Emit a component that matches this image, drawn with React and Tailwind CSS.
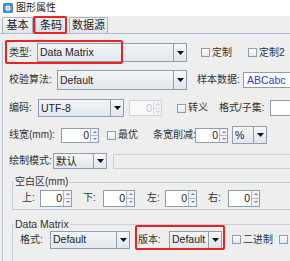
import React from "react";

const font = { fontFamily: '"Liberation Sans", "Noto Sans CJK SC", sans-serif' };

function Arrow() {
  return (
    <svg width="7" height="4" viewBox="0 0 7 4">
      <path d="M0 0 H7 L3.5 4 Z" fill="#111" />
    </svg>
  );
}

function Combo({ w, h = 19, value, className = "" }) {
  return (
    <div
      className={`flex shrink-0 border border-[#8e9db0] bg-gradient-to-b from-[#f3f5f8] to-[#e2e7ed] ${className}`}
      style={{ width: w, height: h }}
    >
      <div className="flex-1 flex items-center pl-[2px] text-[10.5px] text-[#222] leading-none overflow-hidden whitespace-nowrap">
        {value}
      </div>
      <div className="w-[13px] shrink-0 flex items-center justify-center border-l border-[#8e9db0] bg-gradient-to-b from-[#f6f8fa] to-[#dfe5ec]">
        <Arrow />
      </div>
    </div>
  );
}

function Spinner({ w, h = 16, disabled = false, className = "" }) {
  return (
    <div
      className={`flex shrink-0 border ${disabled ? "border-[#ccd4de] bg-[#f8f9fa]" : "border-[#8e9db0] bg-white"} ${className}`}
      style={{ width: w, height: h }}
    >
      <div
        className={`flex-1 flex items-center justify-end pr-[1px] text-[10.5px] leading-none ${disabled ? "text-[#c0c6ce]" : "text-[#222]"}`}
      >
        0
      </div>
      <div className={`w-[8px] flex flex-col border-l ${disabled ? "border-[#d4dae2]" : "border-[#b0bac6]"}`}>
        <div className={`flex-1 flex items-center justify-center border-b ${disabled ? "border-[#d4dae2]" : "border-[#b0bac6]"} bg-[#f0f2f5]`}>
          <svg width="4" height="2" viewBox="0 0 4 2"><path d="M0 2 L2 0 L4 2 Z" fill={disabled ? "#c8ced6" : "#888"} /></svg>
        </div>
        <div className="flex-1 flex items-center justify-center bg-[#f0f2f5]">
          <svg width="4" height="2" viewBox="0 0 4 2"><path d="M0 0 L4 0 L2 2 Z" fill={disabled ? "#c8ced6" : "#888"} /></svg>
        </div>
      </div>
    </div>
  );
}

function Check({ label, className = "" }) {
  return (
    <div className={`flex items-center shrink-0 gap-[2px] ${className}`}>
      <div className="w-[9px] h-[9px] border border-[#8e9db0] bg-gradient-to-b from-[#ffffff] to-[#e3e8ee]" />
      <span className="text-[10px] text-[#333] leading-none whitespace-nowrap">{label}</span>
    </div>
  );
}

function Label({ children, w, className = "" }) {
  return (
    <div className={`shrink-0 text-[10px] text-[#333] leading-none whitespace-nowrap ${className}`} style={{ width: w }}>
      {children}
    </div>
  );
}

export default function App() {
  return (
    <div className="relative w-[290px] h-[261px] overflow-hidden bg-[#eeeeee]" style={font}>
      {/* title bar */}
      <div className="h-[16px] bg-white flex items-center pl-[3px] gap-[3px]">
        <svg width="10" height="10" viewBox="0 0 10 10">
          <rect x="0" y="0" width="10" height="10" rx="1.5" fill="#3d8fd8" />
          <circle cx="5" cy="5" r="2.6" fill="#ffffff" />
          <circle cx="5" cy="5" r="1.3" fill="#f0a030" />
        </svg>
        <span className="text-[10px] text-[#222] leading-none">图形属性</span>
      </div>

      {/* tabs */}
      <div className="flex items-end h-[18px] pl-[2px] border-b border-[#a9bdd6]">
        <div className="h-[16px] w-[31px] flex items-center justify-center border border-b-0 border-[#a7b2bf] bg-gradient-to-b from-[#f4f5f7] to-[#e1e4e8] text-[11px] text-[#222] rounded-t-[2px]">
          基本
        </div>
        <div className="h-[17px] w-[32px] ml-[2px] flex items-center justify-center border border-b-0 border-[#8fa8c8] bg-gradient-to-b from-[#e6eef8] to-[#d2dff0] text-[11px] text-[#222] rounded-t-[2px]">
          条码
        </div>
        <div className="h-[16px] w-[39px] ml-[2px] flex items-center justify-center border border-b-0 border-[#a7b2bf] bg-gradient-to-b from-[#f4f5f7] to-[#e1e4e8] text-[11px] text-[#222] rounded-t-[2px]">
          数据源
        </div>
      </div>

      {/* panel */}
      <div className="ml-[2px] border-l border-[#b8c4d2] h-[227px]">
        {/* row 1 */}
        <div className="flex items-center pl-[6px] mt-[9px] h-[19px]">
          <Label w={28}>类型:</Label>
          <Combo w={150} h={19} value="Data Matrix" />
          <Check label="定制" className="ml-[14px]" />
          <Check label="定制2" className="ml-[16px]" />
        </div>

        {/* row 2 */}
        <div className="flex items-center pl-[6px] mt-[8px] h-[20px]">
          <Label w={48}>校验算法:</Label>
          <Combo w={130} h={20} value="Default" />
          <Label w={46} className="ml-[10px]">样本数据:</Label>
          <div className="shrink-0 w-[60px] h-[16px] border border-[#8e9db0] bg-white flex items-center pl-[3px] text-[10.5px] text-[#2b3bd8] leading-none">
            ABCabc
          </div>
        </div>

        {/* row 3 */}
        <div className="flex items-center pl-[6px] mt-[9px] h-[18px]">
          <Label w={29}>编码:</Label>
          <Combo w={86} h={18} value="UTF-8" />
          <Spinner w={33} h={16} disabled className="ml-[5px]" />
          <Check label="转义" className="ml-[15px]" />
          <Label w={51} className="ml-[11px]">格式/子集:</Label>
          <div className="shrink-0 w-[40px] h-[16px] border border-[#8e9db0] bg-white" />
        </div>

        {/* row 4 */}
        <div className="flex items-center pl-[6px] mt-[9px] h-[18px]">
          <Label w={52}>线宽(mm):</Label>
          <Spinner w={38} h={15} />
          <Check label="最优" className="ml-[8px]" />
          <Label w={42} className="ml-[15px]">条宽削减:</Label>
          <Spinner w={33} h={15} />
          <Combo w={35} h={18} value="%" className="ml-[4px]" />
        </div>

        {/* row 5 */}
        <div className="flex items-center pl-[6px] mt-[9px] h-[16px]">
          <Label w={44}>绘制模式:</Label>
          <Combo w={54} h={16} value="默认" />
          <div className="shrink-0 ml-[6px] w-[200px] h-[15px] border border-[#c9d3df] bg-[#eeeeee]" />
        </div>

        {/* fieldset 1 */}
        <fieldset className="mt-[8px] ml-[9px] mr-[-4px] border border-[#c5cfdb] px-0 pb-[2px]">
          <legend className="text-[10px] text-[#333] leading-none ml-[1px] px-[1px]">空白区(mm)</legend>
          <div className="flex items-center h-[18px] mt-[2px] pl-[9px]">
            <Label w={18}>上:</Label>
            <Spinner w={32} h={17} />
            <Label w={20} className="ml-[11px]">下:</Label>
            <Spinner w={32} h={17} />
            <Label w={18} className="ml-[12px]">左:</Label>
            <Spinner w={32} h={17} />
            <Label w={20} className="ml-[11px]">右:</Label>
            <Spinner w={32} h={17} />
          </div>
        </fieldset>

        {/* fieldset 2 */}
        <fieldset className="mt-[9px] ml-[9px] mr-[-4px] border border-[#c5cfdb] px-0 h-[48px]">
          <legend className="text-[10.5px] text-[#333] leading-none ml-[1px] px-[1px]">Data Matrix</legend>
          <div className="flex items-center h-[18px] mt-[1px] pl-[7px]">
            <Label w={30}>格式:</Label>
            <Combo w={80} h={18} value="Default" />
            <Label w={31} className="ml-[8px]">版本:</Label>
            <Combo w={53} h={18} value="Default" />
            <Check label="二进制" className="ml-[10px]" />
            <Check label="其他" className="ml-[6px]" />
          </div>
        </fieldset>
      </div>

      {/* red highlight overlays */}
      <div className="absolute left-[33px] top-[16px] w-[34px] h-[18px] border-2 border-[#e8241f] rounded-[2px]" />
      <div className="absolute left-[5px] top-[40px] w-[118px] h-[24px] border-2 border-[#e8241f] rounded-[2px]" />
      <div className="absolute left-[135px] top-[225px] w-[90px] h-[25px] border-2 border-[#e8241f] rounded-[2px]" />
    </div>
  );
}
